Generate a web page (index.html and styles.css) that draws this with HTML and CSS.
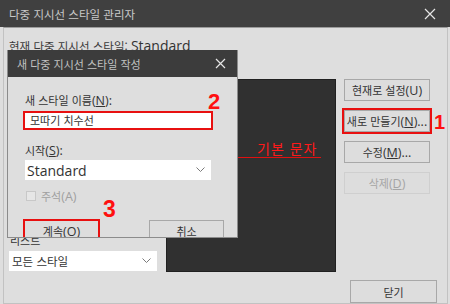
FILE: index.html
```html
<!DOCTYPE html>
<html lang="ko">
<head>
<meta charset="utf-8">
<title>다중 지시선 스타일 관리자</title>
<link rel="stylesheet" href="styles.css">
</head>
<body>
<div class="window">
  <div class="titlebar">
    <span class="title">다중 지시선 스타일 관리자</span>
    <svg class="close" width="12" height="12" viewBox="0 0 12 12"><path d="M1 1L11 11M11 1L1 11" stroke="#e6e6e6" stroke-width="1.2" fill="none"/></svg>
  </div>
  <div class="client">
    <div class="head">현재 다중 지시선 스타일: <span class="lat">Standard</span></div>
    <div class="content">
      <div class="leftcol">
        <div class="listbox"></div>
        <div class="label">리스트</div>
        <div class="combo"><span>모든 스타일</span><svg class="chev" width="9" height="6" viewBox="0 0 9 6"><path d="M0.5 0.5L4.5 4.5L8.5 0.5" stroke="#7a7a7a" fill="none"/></svg></div>
      </div>
      <div class="preview">
        <div class="leader"></div>
        <div class="ptext">기본 문자</div>
      </div>
      <div class="btncol">
        <div class="btn">현재로 설정<span class="lat">(U)</span></div>
        <div class="btn marked">새로 만들기<span class="lat">(<u>N</u>)...</span><span class="num n1">1</span></div>
        <div class="btn">수정<span class="lat">(<u>M</u>)...</span></div>
        <div class="btn disabled">삭제<span class="lat">(<u>D</u>)</span></div>
      </div>
    </div>
    <div class="footer">
      <div class="btn closebtn">닫기</div>
    </div>
  </div>

  <div class="dialog">
    <div class="dtitle">
      <span class="title">새 다중 지시선 스타일 작성</span>
      <svg class="close" width="11" height="11" viewBox="0 0 11 11"><path d="M1 1L10 10M10 1L1 10" stroke="#e6e6e6" stroke-width="1.2" fill="none"/></svg>
    </div>
    <div class="dbody">
      <div class="dlabel">새 스타일 이름<span class="lat">(<u>N</u>):</span></div>
      <div class="input">모따기 치수선</div>
      <div class="dlabel second">시작<span class="lat">(<u>S</u>):</span></div>
      <div class="combo dcombo"><span class="lat big">Standard</span><svg class="chev" width="9" height="6" viewBox="0 0 9 6"><path d="M0.5 0.5L4.5 4.5L8.5 0.5" stroke="#7a7a7a" fill="none"/></svg></div>
      <div class="check"><span class="box"></span><span>주석<span class="lat">(A)</span></span></div>
      <div class="dbtns">
        <div class="btn dbtn ok">계속<span class="lat">(<u>O</u>)</span></div>
        <div class="btn dbtn">취소</div>
      </div>
      <span class="num n2">2</span>
      <span class="num n3">3</span>
    </div>
  </div>
</div>
</body>
</html>
```
FILE: styles.css
```css
* { box-sizing: border-box; }
html, body { margin: 0; padding: 0; }
body {
  width: 450px;
  height: 304px;
  overflow: hidden;
  font-family: "Noto Sans CJK KR", "Noto Sans", sans-serif;
  font-size: 11px;
  color: #333;
}
.lat { font-family: "Open Sans", "Noto Sans", sans-serif; font-size: 12.5px; }
u { text-decoration-thickness: 1px; text-underline-offset: 1px; }

.window {
  position: relative;
  width: 450px;
  height: 304px;
  background: #dedede;
  display: flex;
  flex-direction: column;
}
.titlebar {
  height: 27px;
  background: #404040;
  display: flex;
  align-items: center;
  justify-content: space-between;
  padding: 0 14px 0 9px;
  flex: none;
}
.title { color: #c9c9c9; font-size: 11.5px; }
.client {
  flex: 1;
  margin: 0 2px 1px 3px;
  border: 1px solid #c2c2c2;
  border-top: 1px solid #9c9c9c;
  padding: 0 0 0 5px;
  display: flex;
  flex-direction: column;
}
.head {
  height: 20px;
  line-height: 20px;
  margin-top: 8px;
  font-size: 11.5px;
  color: #3a3a3a;
}
.head .lat { font-size: 14px; color: #333; }
.content {
  margin-top: 23px;
  display: grid;
  grid-template-columns: 148px 170px 85px;
  column-gap: 9px;
  height: 193px;
}
.content > .btncol { margin-left: -1px; }
.leftcol { display: flex; flex-direction: column; }
.listbox { height: 151px; background: #fff; border: 1px solid #b8b8b8; }
.label { margin-top: 3px; height: 14px; line-height: 14px; padding-left: 1px; }
.combo {
  margin-top: 4px;
  height: 20px;
  background: #fff;
  display: flex;
  align-items: center;
  justify-content: space-between;
  padding: 0 6px 0 3px;
  font-size: 11.5px;
}
.chev { flex: none; }
.preview {
  position: relative;
  background: #303030;
  border: 1px solid #202020;
}
.leader {
  position: absolute;
  left: 40px;
  width: 114px;
  top: 77px;
  height: 1px;
  background: #e01010;
}
.ptext {
  position: absolute;
  left: 90px;
  top: 58px;
  color: #ff1a1a;
  font-size: 14px;
  letter-spacing: 1px;
}
.btncol { display: flex; flex-direction: column; gap: 9px; }
.btn {
  position: relative;
  height: 22px;
  border: 1px solid #a8a8a8;
  background: #dddddd;
  display: flex;
  align-items: center;
  justify-content: center;
  white-space: nowrap;
  color: #333;
}
.btn.marked { outline: 2px solid #e81010; outline-offset: 0px; }
.btn.disabled { border-color: #cfcfcf; color: #a5a5a5; }
.num {
  position: absolute;
  font-family: "Liberation Sans", Arial, sans-serif;
  font-weight: bold;
  color: #ff1010;
  line-height: 1;
}
.n1 { font-size: 20px; left: 89px; top: 1px; }
.footer {
  display: flex;
  justify-content: flex-end;
  padding-right: 10px;
  margin-top: 8px;
}
.closebtn { width: 87px; height: 23px; }

.dialog {
  position: absolute;
  left: 7px;
  top: 50px;
  width: 231px;
  height: 188px;
  background: #dedede;
  border: 1px solid #8c8c8c;
  border-top: none;
  overflow: hidden;
  display: flex;
  flex-direction: column;
}
.dtitle {
  height: 27px;
  background: #3c3c3c;
  display: flex;
  align-items: center;
  justify-content: space-between;
  padding: 0 11px 0 9px;
  flex: none;
}
.dtitle .title { font-size: 11px; color: #c2c2c2; }
.dbody {
  position: relative;
  padding: 15px 0 0 17px;
  flex: 1;
}
.dlabel { height: 16px; line-height: 16px; }
.dlabel.second { margin-top: 12px; }
.input {
  margin: 3px 0 0 -2px;
  width: 190px;
  height: 19px;
  background: #fff;
  border: 2px solid #e81010;
  line-height: 15px;
  padding-left: 5px;
  font-size: 11px;
}
.dcombo { margin-top: 2px; width: 186px; padding-left: 2px; }
.big { font-size: 14px; }
.check {
  margin-top: 9px;
  display: flex;
  align-items: center;
  gap: 5px;
  color: #a0a0a0;
  height: 14px;
  padding-left: 1px;
}
.check .box { width: 10px; height: 10px; border: 1px solid #c8c8c8; background: #e6e6e6; }
.dbtns {
  margin-top: 17px;
  display: flex;
  gap: 50px;
  margin-left: 0;
}
.dbtn { width: 75px; height: 22px; }
.dbtn.ok { outline: 2px solid #e81010; outline-offset: -1px; width: 75px; margin-left: -1px; }
.n2 { font-size: 22px; left: 200px; top: 14px; }
.n3 { font-size: 23px; left: 95px; top: 121px; }
```
